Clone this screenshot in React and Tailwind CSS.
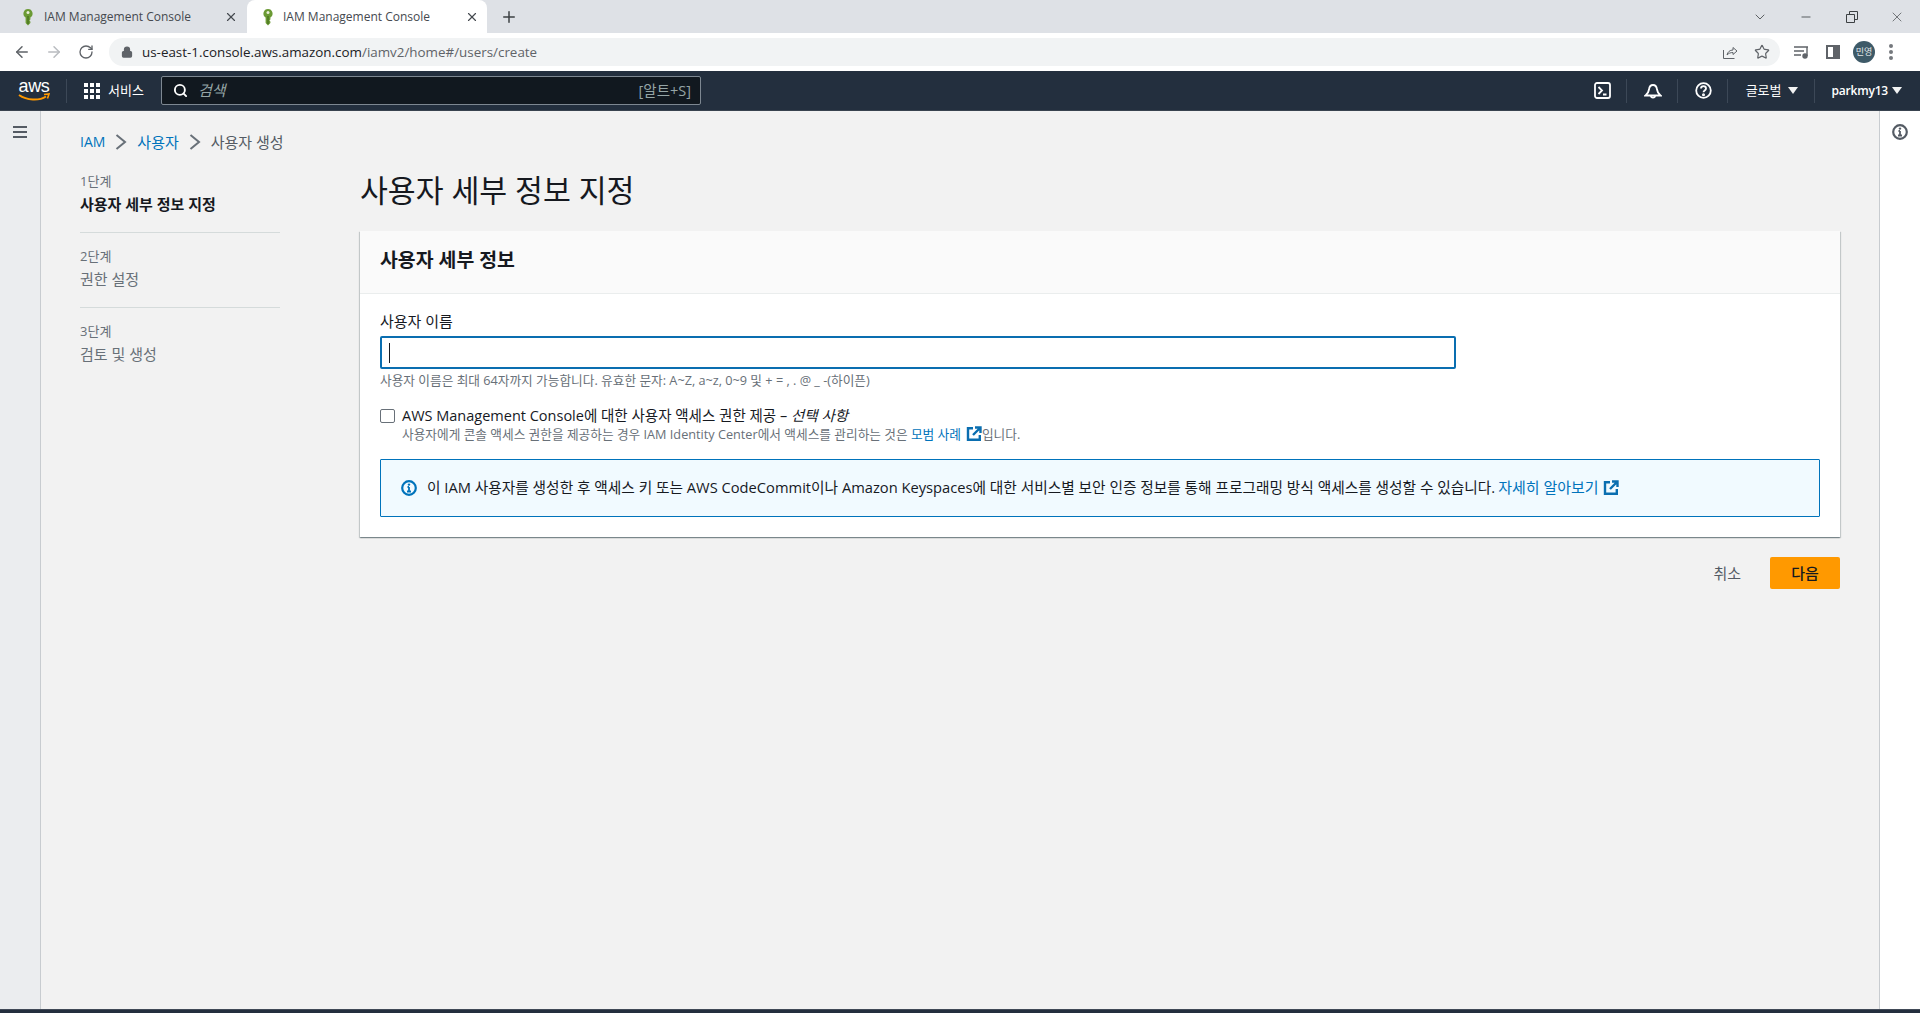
import React from "react";
import { ArrowLeft, ArrowRight, RotateCw, Lock, Plus, X, ChevronDown, Minus, Star, Search } from "lucide-react";

const KeyIcon = () => (
  <svg width="16" height="18" viewBox="0 0 16 18">
    <path d="M8 1a4.600 4.600 0 0 0-2.400 8.500V15l2.400 2.400 2.400-2.400v-1.600l-1-1 1-1V9.500A4.600 4.600 0 0 0 8 1z" fill="#6b9a34" />
    <circle cx="8" cy="4.600" r="1.500" fill="#e9efd8" />
    <path d="M8 8v8" stroke="#3f6418" strokeWidth="1" />
  </svg>
);

const ExternalIcon = () => (
  <svg width="16" height="16" viewBox="0 0 16 16" fill="none" stroke="#0a6eb0" strokeWidth="2.400">
    <path d="M7 2.200H2v11.600h11.800V9" />
    <path d="M9 1.500h5.500V7M14 2L7 9" />
  </svg>
);

const InfoIcon = ({ color, size = 16 }) => (
  <svg width={size} height={size} viewBox="0 0 16 16" fill="none">
    <circle cx="8" cy="8" r="6.800" stroke={color} strokeWidth="2.200" />
    <path d="M8 7v4.500M6 11.500h4M6.500 7H8" stroke={color} strokeWidth="1.800" />
    <circle cx="8" cy="4.600" r="1.200" fill={color} />
  </svg>
);

const Tab = ({ active }) => (
  <div className={`flex items-center w-[240px] h-[33px] pr-[8px] text-xs text-[#45494f] ${active ? "pl-[13px] bg-white rounded-t-[8px] text-[#3c4043]" : "pl-[14px]"}`}>
    <KeyIcon />
    <span className={`flex-1 ${active ? "ml-[7px]" : "ml-[8px]"}`}>IAM Management Console</span>
    <X size={14} strokeWidth={2} className="text-[#45494f]" />
  </div>
);

const Divider = () => <div className="w-px h-6 bg-[#3c4857]" />;

const Caret = ({ tight }) => (
  <span className={`w-0 h-0 border-x-[5px] border-x-transparent border-t-[7px] border-t-[#f2f3f3] ${tight ? "ml-[4px]" : "ml-[6px]"}`} />
);

const Chevron = () => (
  <svg width="12" height="16" viewBox="0 0 12 16" fill="none" stroke="#687078" strokeWidth="2" className="mx-[10px]">
    <path d="M1.500 1l8.500 7-8.500 7" />
  </svg>
);

const Step = ({ num, title, active, last }) => (
  <div>
    <div className="h-5 text-[13px] leading-[18px] text-[#687078]">{num}</div>
    <div className={`h-6 text-[15px] leading-6 ${active ? "font-semibold text-[#16191f]" : "text-[#687078]"}`}>{title}</div>
    {!last && <div className="mt-4 mb-[14px] h-px bg-[#d5dbdb]" />}
  </div>
);

export default function App() {
  return (
    <div className="flex flex-col h-screen w-full overflow-hidden bg-[#f2f2f2] font-['Open_Sans','Noto_Sans_CJK_KR',sans-serif] text-[#16191f]">
      {/* tab strip */}
      <div className="flex items-center h-[33px] bg-[#dee1e6] shrink-0">
        <div className="w-[247px] pl-[6px]"><Tab /></div>
        <Tab active />
        <Plus size={18} strokeWidth={2} className="ml-[13px] text-[#3c4043]" />
        <div className="ml-auto flex items-center text-[#3c4043]">
          <ChevronDown size={16} strokeWidth={1.2} />
          <Minus size={14} strokeWidth={1.400} className="ml-[31px]" />
          <svg width="12" height="12" viewBox="0 0 12 12" fill="none" stroke="#3c4043" className="ml-[33px]">
            <path d="M.5 3.500h8v8h-8zM3.500 3.500v-3h8v8h-3" />
          </svg>
          <X size={16} strokeWidth={1} className="ml-[31px] mr-[15px]" />
        </div>
      </div>

      {/* toolbar */}
      <div className="flex items-center h-[38px] bg-white shrink-0">
        <ArrowLeft size={18} strokeWidth={2} className="ml-[13px] text-[#5f6368]" />
        <ArrowRight size={18} strokeWidth={2} className="ml-[14px] text-[#b9bcc0]" />
        <RotateCw size={16} strokeWidth={2} className="ml-[15px] text-[#5f6368]" />
        <div className="flex items-center ml-[15px] w-[1671px] h-[28px] rounded-full bg-[#f1f3f4] pl-[12px] pr-[10px]">
          <Lock size={12} strokeWidth={2.500} fill="#5f6368" className="text-[#5f6368]" />
          <span className="ml-[9px] text-[13.400px] text-[#202124]">us-east-1.console.aws.amazon.com<span className="text-[#5f6368]">/iamv2/home#/users/create</span></span>
          <svg width="16" height="16" viewBox="0 0 16 16" fill="none" stroke="#5f6368" strokeWidth="1" className="ml-auto">
            <path d="M1.500 6v8.500h11" />
            <path d="M5 11c.6-3 2.800-5 6-5V3.500l4 3.500-4 3.500V8.500c-2.500 0-4.500.8-6 2.500z" />
          </svg>
          <Star size={16} strokeWidth={1.800} className="ml-[16px] text-[#5f6368]" />
        </div>
        <svg width="16" height="14" viewBox="0 0 16 14" fill="none" stroke="#5f6368" strokeWidth="1.400" className="ml-[14px]">
          <path d="M0 2h14M0 6h10M0 10h7" />
          <path d="M13 2v9" />
          <circle cx="11" cy="11" r="2" fill="#5f6368" />
        </svg>
        <div className="ml-[16px] flex w-[14px] h-[14px] border-2 border-[#5f6368]">
          <div className="ml-auto w-[5px] bg-[#5f6368]" />
        </div>
        <div className="ml-[13px] flex items-center justify-center w-[22px] h-[22px] rounded-full bg-[#3e5a68] text-[9px] text-[#e3e8ea]">민영</div>
        <div className="ml-[14px] flex flex-col gap-[2px]">
          <span className="w-[4px] h-[4px] rounded-full bg-[#74787d]" />
          <span className="w-[4px] h-[4px] rounded-full bg-[#74787d]" />
          <span className="w-[4px] h-[4px] rounded-full bg-[#74787d]" />
        </div>
      </div>

      {/* aws header */}
      <div className="flex items-center h-[40px] bg-[#232f3e] border-b border-[#39434f] shrink-0 text-white">
        <div className="relative ml-[18px] w-[32px] h-[24px] flex justify-center">
          <span className="font-['Liberation_Sans',sans-serif] text-[18px] leading-[15px] tracking-[-0.3px] text-white">aws</span>
          <svg width="32" height="10" viewBox="0 0 32 10" fill="none" className="absolute left-0 bottom-0">
            <path d="M1 2c8 5.500 20 6 27 1.500" stroke="#ff9900" strokeWidth="2" />
            <path d="M26 1.500l5-.5-1.500 4.500" stroke="#ff9900" strokeWidth="1.600" />
          </svg>
        </div>
        <div className="ml-[16px] w-px h-6 bg-[#3c4857]" />
        <div className="ml-[17px] grid grid-cols-3 gap-[2px]">
          {[0, 1, 2, 3, 4, 5, 6, 7, 8].map((i) => (
            <span key={i} className="w-[4px] h-[4px] bg-white" />
          ))}
        </div>
        <span className="ml-[8px] w-[36px] text-[13px] whitespace-nowrap">서비스</span>
        <div className="flex items-center ml-[17px] w-[540px] h-[29px] bg-[#11181f] border border-[#7d8791] rounded-[2px] pl-[11px] pr-[9px]">
          <Search size={15} strokeWidth={3} className="text-white" />
          <span className="ml-[10px] text-[15px] italic text-[#95a5a6]">검색</span>
          <span className="ml-auto text-[14.500px] text-[#95a5a6]">[알트+S]</span>
        </div>
        <div className="ml-auto flex items-center">
          <svg width="17" height="17" viewBox="0 0 17 17" fill="none" stroke="white" strokeWidth="1.800">
            <rect x="1" y="1" width="15" height="15" rx="2" />
            <path d="M4.500 5l3.500 3.500-3.500 3.500M9 12.500h3.500" />
          </svg>
          <div className="ml-[15px]"><Divider /></div>
          <svg width="18" height="18" viewBox="0 0 18 18" fill="none" stroke="white" strokeWidth="1.800" className="ml-[17px]">
            <path d="M1.500 13.500c2-1.500 3-2.500 3.500-6 .3-2.500 2-4.500 4-4.500s3.700 2 4 4.500c.5 3.500 1.500 4.500 3.500 6z" />
            <path d="M7 14c0 2 4 2 4 0" />
          </svg>
          <div className="ml-[15px]"><Divider /></div>
          <svg width="17" height="17" viewBox="0 0 17 17" fill="none" stroke="white" strokeWidth="1.800" className="ml-[17px]">
            <circle cx="8.500" cy="8.500" r="7.300" />
            <path d="M6 6.500c0-3.200 5-3.200 5 0 0 2-2.500 2-2.500 3.800" />
            <circle cx="8.500" cy="12.800" r=".6" fill="white" />
          </svg>
          <div className="ml-[15px]"><Divider /></div>
          <span className="ml-[18px] text-[13px]">글로벌</span>
          <Caret />
          <div className="ml-[16px]"><Divider /></div>
          <span className="ml-[17px] text-xs font-semibold tracking-[-0.2px]">parkmy13</span>
          <Caret tight />
          <div className="w-[18px]" />
        </div>
      </div>

      <div className="flex flex-1 min-h-0">
        {/* collapsed nav */}
        <div className="w-[41px] shrink-0 bg-[#ebedef] border-r border-[#c8ccd0] flex justify-center pt-[15px]">
          <div className="flex flex-col gap-[3px] h-[12px] mr-[1px]">
            <span className="w-[14px] h-[2px] bg-[#545b64]" />
            <span className="w-[14px] h-[2px] bg-[#545b64]" />
            <span className="w-[14px] h-[2px] bg-[#545b64]" />
          </div>
        </div>

        {/* page */}
        <div className="flex-1 pl-[39px] pr-[39px] pt-[21px] min-w-0">
          <div className="flex items-center h-5 text-[15px]">
            <span className="text-sm text-[#0073bb]">IAM</span>
            <Chevron />
            <span className="text-[#0073bb]">사용자</span>
            <Chevron />
            <span className="text-[#545b64]">사용자 생성</span>
          </div>

          <div className="flex mt-[20px]">
            <div className="w-[200px] shrink-0">
              <Step num="1단계" title="사용자 세부 정보 지정" active />
              <Step num="2단계" title="권한 설정" />
              <Step num="3단계" title="검토 및 생성" last />
            </div>

            <div className="flex-1 ml-[80px] min-w-0">
              <h1 className="h-8 text-[30.300px] leading-[37px]">사용자 세부 정보 지정</h1>

              <div className="mt-[27px] bg-white shadow-[0_1px_1px_0_rgba(0,28,36,0.3),1px_1px_1px_0_rgba(0,28,36,0.15),-1px_1px_1px_0_rgba(0,28,36,0.15)]">
                <div className="h-[63px] flex items-center px-5 pb-[4px] bg-[#fafafa] border-b border-[#eaeded]">
                  <h2 className="text-[19.400px] font-bold">사용자 세부 정보</h2>
                </div>
                <div className="px-5 pt-[17px] pb-5">
                  <div className="h-5 text-[15px] leading-5 text-[#16191f]">사용자 이름</div>
                  <div className="mt-[5px] flex items-center w-[1076px] h-[33px] border-2 border-[#0a6eb0] rounded-[2px] pl-[7px]">
                    <span className="w-px h-[20px] bg-[#16191f]" />
                  </div>
                  <div className="mt-[4px] h-4 text-[12.700px] leading-[15px] text-[#687078]">사용자 이름은 최대 64자까지 가능합니다. 유효한 문자: A~Z, a~z, 0~9 및 + = , . @ _ -(하이픈)</div>

                  <div className="flex mt-[17px]">
                    <span className="mt-[3px] w-[15px] h-[14px] border border-[#687078] rounded-[2px] bg-white" />
                    <div className="ml-[7px]">
                      <div className="h-5 text-[14.500px] leading-5">AWS Management Console에 대한 사용자 액세스 권한 제공 – <i>선택 사항</i></div>
                      <div className="flex items-center mt-px h-[14px] text-[12.700px] leading-[14px] text-[#687078]">
                        사용자에게 콘솔 액세스 권한을 제공하는 경우 IAM Identity Center에서 액세스를 관리하는 것은&nbsp;
                        <span className="text-[#0073bb]">모범 사례</span>
                        <span className="ml-[5px]"><ExternalIcon /></span>
                        입니다.
                      </div>
                    </div>
                  </div>

                  <div className="flex items-center mt-[18px] h-[58px] pl-[20px] pb-[1px] border border-[#0073bb] bg-[#f1faff] rounded-[1px] text-[14.700px]">
                    <InfoIcon color="#0073bb" />
                    <span className="ml-[10px]">이 IAM 사용자를 생성한 후 액세스 키 또는 AWS CodeCommit이나 Amazon Keyspaces에 대한 서비스별 보안 인증 정보를 통해 프로그래밍 방식 액세스를 생성할 수 있습니다.</span>
                    <span className="ml-[3px] text-[15px] text-[#0073bb]">자세히 알아보기</span>
                    <span className="ml-[4px]"><ExternalIcon /></span>
                  </div>
                </div>
              </div>

              <div className="flex items-center justify-end mt-5">
                <span className="text-[15px] text-[#545b64]">취소</span>
                <button className="ml-[29px] w-[70px] h-8 rounded-[2px] bg-[#ff9900] text-[15px] font-medium text-[#16191f]">다음</button>
              </div>
            </div>
          </div>
        </div>

        {/* tools panel */}
        <div className="w-[41px] shrink-0 bg-white border-l border-[#c8ccd0] flex justify-center pt-[13px]">
          <InfoIcon color="#545b64" />
        </div>
      </div>

      {/* footer */}
      <div className="h-[4px] bg-[#232f3e] border-t border-[#414a57] shrink-0" />
    </div>
  );
}
